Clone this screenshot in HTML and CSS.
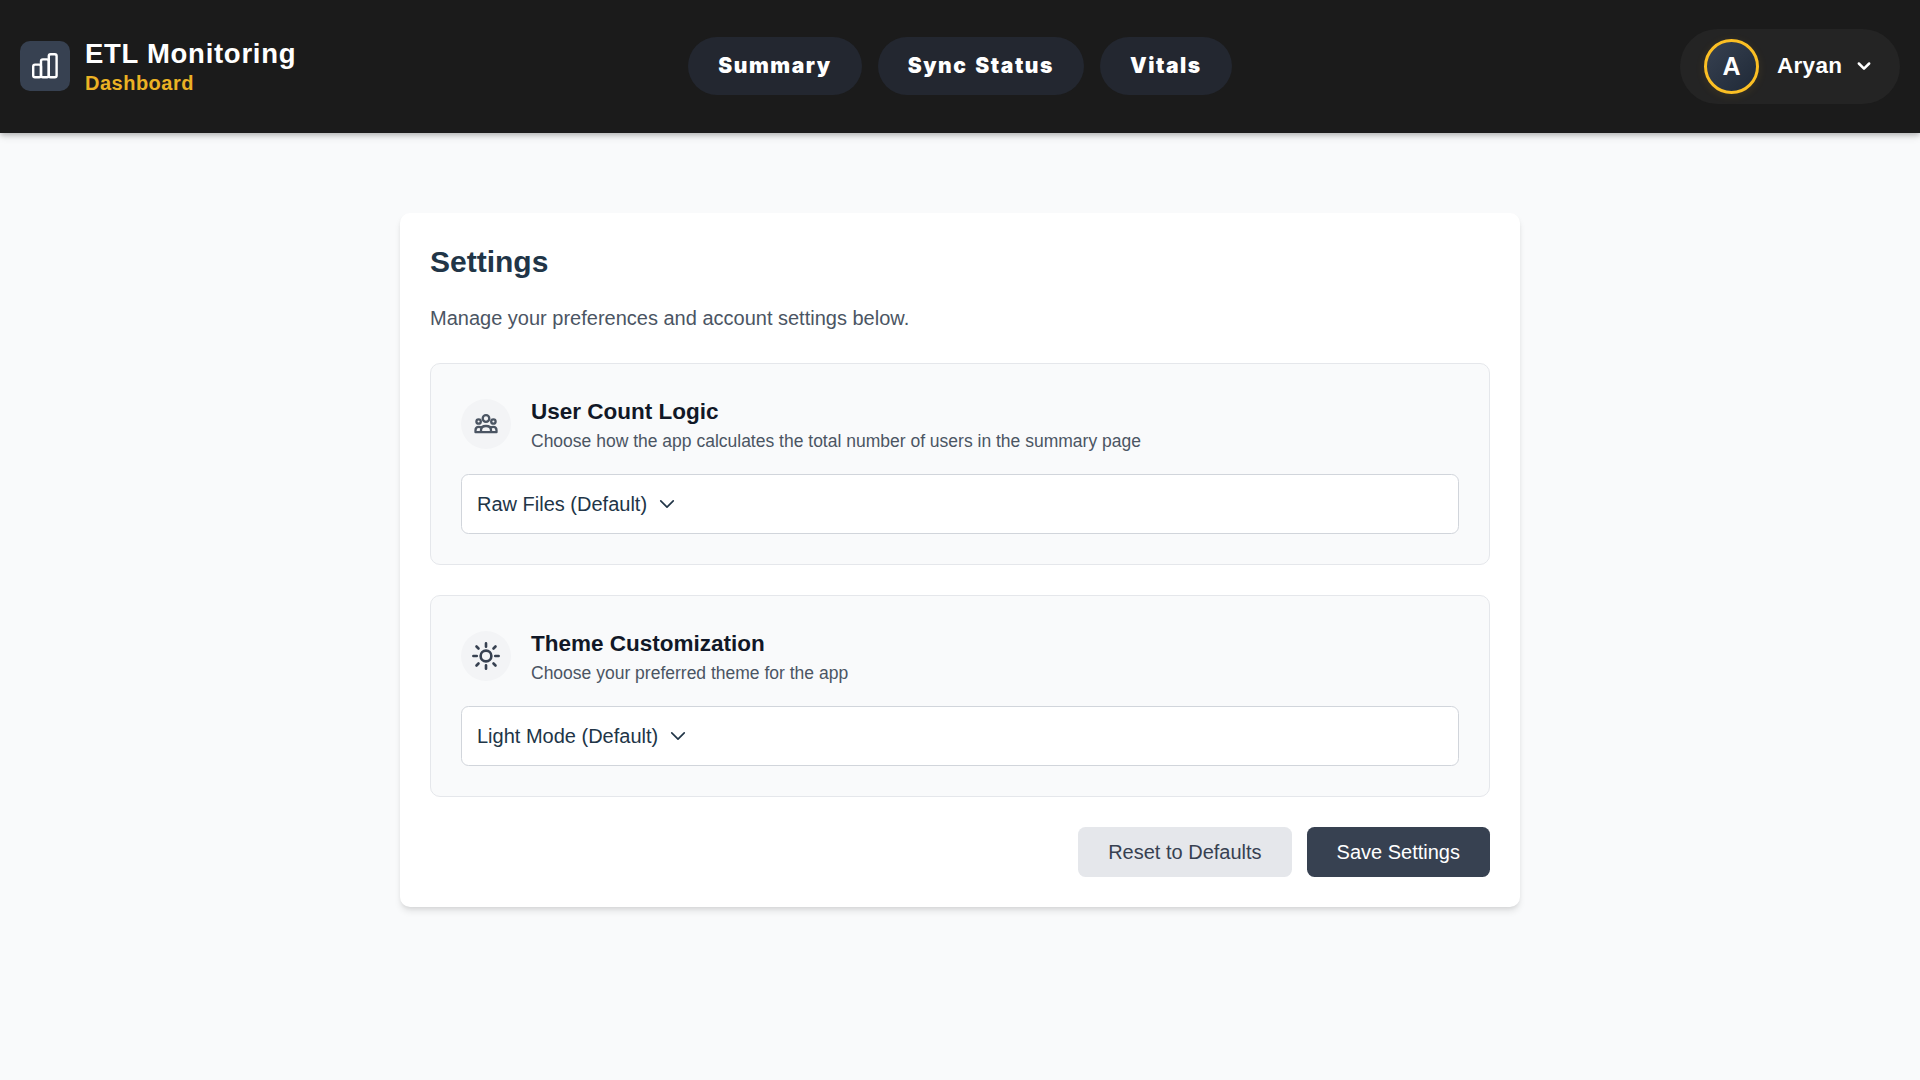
FILE: index.html
```html
<!DOCTYPE html>
<html lang="en">
<head>
<meta charset="utf-8">
<title>ETL Monitoring Dashboard</title>
<link rel="stylesheet" href="styles.css">
</head>
<body>
<header class="header">
  <div class="brand">
    <div class="brand-icon">
      <svg width="26" height="26" viewBox="0 0 26 26" fill="none" stroke="currentColor" stroke-width="2.4"><rect x="1.200" y="11.600" width="7.800" height="12.600" rx="1.800"/><rect x="9" y="6.400" width="7.800" height="17.800" rx="1.800"/><rect x="16.800" y="1.200" width="7.800" height="23" rx="1.800"/></svg>
    </div>
    <div class="brand-text">
      <div class="brand-title">ETL Monitoring</div>
      <div class="brand-subtitle">Dashboard</div>
    </div>
  </div>
  <nav class="nav">
    <a class="nav-link">Summary</a>
    <a class="nav-link">Sync Status</a>
    <a class="nav-link">Vitals</a>
  </nav>
  <div class="profile">
    <div class="avatar">A</div>
    <span class="profile-name">Aryan</span>
    <svg class="profile-chevron" width="20" height="20" viewBox="0 0 24 24" fill="none" stroke="currentColor" stroke-width="3" stroke-linecap="round" stroke-linejoin="round"><path d="M5.800 9l6.200 6.200L18.200 9"/></svg>
  </div>
</header>
<main class="card">
  <h1 class="card-title">Settings</h1>
  <p class="card-intro">Manage your preferences and account settings below.</p>
  <section class="panel">
    <div class="panel-head">
      <div class="panel-icon panel-icon-users">
        <svg width="24" height="20" viewBox="0 0 24 20" fill="none" stroke="currentColor" stroke-width="2.3" stroke-linejoin="round"><circle cx="12" cy="4.500" r="3.300"/><circle cx="4.600" cy="7.500" r="2.200"/><circle cx="19.400" cy="7.500" r="2.200"/><path d="M7 18.200v-2c0-2.500 2-4.200 5-4.200s5 1.700 5 4.200v2ZM7 18.200H1.500v-2c0-2 1.300-3.400 3.300-3.400 1 0 1.800.2 2.500.7M17 18.200h5.500v-2c0-2-1.300-3.400-3.300-3.400-1 0-1.800.2-2.500.7"/></svg>
      </div>
      <div>
        <h2 class="panel-title">User Count Logic</h2>
        <p class="panel-desc">Choose how the app calculates the total number of users in the summary page</p>
      </div>
    </div>
    <div class="select">
      <span>Raw Files (Default)</span>
      <svg width="20" height="20" viewBox="0 0 24 24" fill="none" stroke="currentColor" stroke-width="2" stroke-linecap="round" stroke-linejoin="round"><path d="m19.500 8.250-7.500 7.500-7.500-7.500"/></svg>
    </div>
  </section>
  <section class="panel">
    <div class="panel-head">
      <div class="panel-icon">
        <svg width="30" height="30" viewBox="0 0 24 24" fill="none" stroke="currentColor" stroke-width="2.1" stroke-linecap="round"><circle cx="12" cy="12" r="4.300"/><path d="M12 1.900v2.700M12 19.400v2.700M1.900 12h2.700M19.400 12h2.700M4.400 4.400l1.600 1.600M18 18l1.600 1.600M4.400 19.600l1.600-1.600M18 6l1.600-1.600"/></svg>
      </div>
      <div>
        <h2 class="panel-title">Theme Customization</h2>
        <p class="panel-desc">Choose your preferred theme for the app</p>
      </div>
    </div>
    <div class="select">
      <span>Light Mode (Default)</span>
      <svg width="20" height="20" viewBox="0 0 24 24" fill="none" stroke="currentColor" stroke-width="2" stroke-linecap="round" stroke-linejoin="round"><path d="m19.500 8.250-7.500 7.500-7.500-7.500"/></svg>
    </div>
  </section>
  <div class="actions">
    <button class="btn btn-reset">Reset to Defaults</button>
    <button class="btn btn-save">Save Settings</button>
  </div>
</main>
</body>
</html>
```
FILE: styles.css
```css
* { box-sizing: border-box; margin: 0; padding: 0; }
body {
  min-height: 100vh;
  background: #f9fafb;
  color: #213547;
  font-family: "Liberation Sans", Arial, sans-serif;
  font-size: 20px;
  line-height: 30px;
}
svg { display: block; flex: none; }
.header {
  display: grid;
  grid-template-columns: 1fr auto 1fr;
  align-items: center;
  height: 133px;
  padding: 0 20px 1px;
  background: #1b1b1b;
  color: #fff;
  box-shadow: 0 5px 7.5px -1px rgba(0, 0, 0, .1), 0 2px 5px rgba(0, 0, 0, .2);
}
.brand { display: flex; align-items: center; gap: 15px; }
.brand-icon {
  display: grid;
  place-items: center;
  width: 50px;
  height: 50px;
  border-radius: 10px;
  background: #374151;
}
.brand-title { font-size: 27.5px; font-weight: 700; line-height: 34px; letter-spacing: .72px; }
.brand-subtitle { color: #ebb224; font-weight: 700; line-height: 25px; letter-spacing: .5px; }
.nav { display: flex; gap: 16px; }
.nav-link {
  padding: 14px 30px;
  border-radius: 30px;
  background: #232730;
  font-family: Inter, sans-serif;
  font-size: 21px;
  font-weight: 900;
  letter-spacing: 1.55px;
  word-spacing: 2px;
}
.profile {
  justify-self: end;
  display: flex;
  align-items: center;
  width: 220px;
  height: 75px;
  padding-left: 24px;
  border-radius: 38px;
  background: #242424;
}
.avatar {
  display: grid;
  place-items: center;
  width: 55px;
  height: 55px;
  border: 3px solid #fbbf24;
  border-radius: 50%;
  background: linear-gradient(135deg, #374151, #1f2937);
  box-shadow: 0 2px 10px rgba(251, 191, 36, .1);
  font-size: 25px;
  font-weight: 700;
}
.profile-name { margin-left: 18px; font-size: 22.5px; font-weight: 700; letter-spacing: .3px; }
.profile-chevron { margin-left: 12px; }
.card {
  width: 1120px;
  margin: 80px auto 0;
  padding: 30px;
  border-radius: 10px;
  background: #fff;
  box-shadow: 0 5px 7.5px -1.25px rgba(0, 0, 0, .1), 0 2.5px 5px -2.5px rgba(0, 0, 0, .1);
}
.card-title { margin-bottom: 22px; font-size: 30px; line-height: 38px; }
.card-intro { margin-bottom: 30px; color: #4b5563; }
.panel {
  margin-bottom: 30px;
  padding: 30px;
  border: 1px solid #e5e7eb;
  border-radius: 10px;
  background: #f9fafb;
}
.panel-head { display: flex; align-items: center; gap: 20px; margin-bottom: 20px; }
.panel-icon {
  display: grid;
  place-items: center;
  width: 50px;
  height: 50px;
  border-radius: 50%;
  background: #f3f4f6;
  color: #374151;
}
.panel-icon-users { color: #4b5563; }
.panel-title { color: #111827; font-size: 22.5px; line-height: 35px; }
.panel-desc { color: #4b5563; font-size: 17.5px; line-height: 25px; }
.select {
  display: flex;
  align-items: center;
  gap: 10px;
  height: 60px;
  padding: 0 15px;
  border: 1px solid #d1d5db;
  border-radius: 7.5px;
  background: #fff;
}
.actions { display: flex; justify-content: flex-end; gap: 15px; }
.btn { height: 50px; padding: 0 30px; border: 0; border-radius: 7.5px; font: inherit; }
.btn-reset { background: #e5e7eb; color: #374151; }
.btn-save { background: #374151; color: #fff; }
```
